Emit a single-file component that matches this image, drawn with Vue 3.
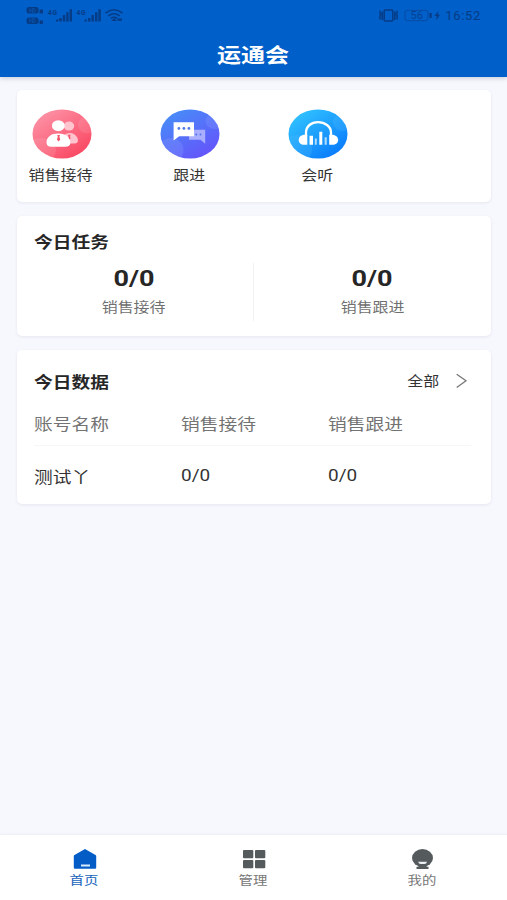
<script setup>
const tasks = [
  { value: '0/0', label: '销售接待' },
  { value: '0/0', label: '销售跟进' },
]
const columns = ['账号名称', '销售接待', '销售跟进']
const rows = [{ name: '测试丫', reception: '0/0', follow: '0/0' }]
</script>

<template>
  <div class="page">
    <header class="header">
      <div class="status">
        <svg class="status-left" width="98" height="20" viewBox="0 0 98 20">
          <g fill="#063b85">
            <rect x="0.5" y="1" width="12" height="6.5" rx="2.5" />
            <rect x="0.5" y="11.5" width="12" height="6.5" rx="2.5" />
            <rect x="13.5" y="3.5" width="3.5" height="4" rx="0.6" />
            <rect x="13.5" y="14.5" width="3.5" height="3.5" rx="0.6" />
            <path d="M30 13.5h2.4v2H30zM33.3 12h2.4v3.5h-2.4zM36.8 9h2.4v6.5h-2.4zM40.2 6.2h2.4v9.3h-2.4zM43.6 3.2h2.4v12.3h-2.4z" />
            <path d="M58.5 13.5h2.4v2h-2.4zM62 12h2.4v3.5H62zM65.5 9h2.4v6.5h-2.4zM69 6.2h2.4v9.3H69zM72.4 3.2h2.4v12.3h-2.4z" />
            <path d="M85.5 15l2.7-3 2.7 3zM91.5 12.5h4.5v2.2h-4.5z" />
          </g>
          <g class="micro" fill="#063b85">
            <text x="22" y="8.8" textLength="9">4G</text>
            <text x="50.5" y="8.8" textLength="9">4G</text>
          </g>
          <g class="micro" fill="#0650a8">
            <text x="3" y="6.5" textLength="7">HD</text>
            <text x="3" y="17" textLength="7">HD</text>
          </g>
          <g fill="none" stroke="#063b85" stroke-width="1.5">
            <path d="M79.5 7.2Q88 .5 96.5 7.2M82.2 10Q88 5.5 93.8 10M84.8 12.4Q88 10 91.2 12.4" />
          </g>
        </svg>
        <div class="status-right">
          <svg width="62" height="16" viewBox="0 0 62 16">
            <g fill="none" stroke="#063b85" stroke-width="1.5">
              <rect x="5.2" y="2" width="8.6" height="11" rx="1" />
              <path d="M3.2 3.4v8.5M.9 2.7v2.6l.8 1-.8 1.3v3.8M15.8 3.4v8.5M18.1 2.7v2.6l-.8 1 .8 1.3v3.8" />
            </g>
            <rect x="26" y="2.3" width="23" height="10.4" rx="2.4" fill="none" stroke="#064ba4" />
            <path d="M50.5 5h2.2v5h-2.2zM59.5 3l-4 5h2.4l-.8 4.2 4-5.4h-2.4z" fill="#063b85" />
            <text x="31.5" y="11.4" textLength="12.5" class="battery" fill="#064292">56</text>
          </svg>
          <span class="clock">16:52</span>
        </div>
      </div>
      <h1 class="wide">运通会</h1>
    </header>

    <main>
      <section class="card shortcuts">
        <div class="shortcut">
          <svg width="60" height="50" viewBox="0 0 60 50">
            <defs>
              <linearGradient id="pink" x1="0" y1="0" x2="0.8" y2="1">
                <stop offset="0" stop-color="#fd9bae" /><stop offset="1" stop-color="#fa4560" />
              </linearGradient>
              <clipPath id="oval"><ellipse cx="30" cy="25" rx="29.5" ry="24.5" /></clipPath>
            </defs>
            <ellipse cx="30" cy="25" rx="29.5" ry="24.5" fill="url(#pink)" />
            <g clip-path="url(#oval)" fill="#fff" fill-opacity=".1">
              <ellipse cx="55" cy="16" rx="9" ry="8.5" /><ellipse cx="9" cy="41" rx="15" ry="12" />
            </g>
            <g fill="#ffc4ce">
              <ellipse cx="37" cy="17" rx="5.2" ry="4.6" />
              <path d="M34 34.5h8.5c4 0 4.2-3.7 2.4-6.5-1.8-2.9-4.3-4-7-4-3 0-4.6 1-5.5 2z" />
            </g>
            <ellipse cx="26.3" cy="16.7" rx="6.4" ry="5.5" fill="#fff" />
            <path d="M14.5 33.5c0-5.6 4.6-9 11.9-9s12 4 12 9.3c0 2.5-2 3.9-5 3.9H19.3c-3 0-4.8-1.4-4.8-4.2z" fill="#fff" />
            <path d="M25.2 26h2.8l-.6 1.7.9 2.7-1.7 2-1.7-2 .9-2.7zM36 25.7h2.5l-.4 1.8.5 2-1.4 1z" fill="#f5566d" />
          </svg>
          <span class="wide">销售接待</span>
        </div>
        <div class="shortcut">
          <svg width="60" height="50" viewBox="0 0 60 50">
            <defs>
              <linearGradient id="violet" x1="0.1" y1="0" x2="0.8" y2="1">
                <stop offset="0" stop-color="#4590f8" /><stop offset="1" stop-color="#6652fb" />
              </linearGradient>
            </defs>
            <ellipse cx="30" cy="25" rx="29.5" ry="24.5" fill="url(#violet)" />
            <g clip-path="url(#oval)" fill="#8fa4ff" fill-opacity=".26">
              <ellipse cx="55" cy="12" rx="9.5" ry="8" /><ellipse cx="11" cy="41" rx="12.5" ry="12" />
            </g>
            <path d="M29 20.8h16.2v14l-4.7-4H29z" fill="#a9aeff" />
            <path d="M13.6 13.2H34v14H19.2l-5.6 4.3z" fill="#fff" />
            <g fill="#5177ed">
              <circle cx="18.9" cy="19.4" r="1.4" /><circle cx="23.9" cy="19.4" r="1.4" /><circle cx="28.9" cy="19.4" r="1.4" />
              <circle cx="36.3" cy="25.5" r="1" /><circle cx="40.5" cy="25.5" r="1" />
            </g>
          </svg>
          <span class="wide">跟进</span>
        </div>
        <div class="shortcut">
          <svg width="60" height="50" viewBox="0 0 60 50">
            <defs>
              <linearGradient id="sky" x1="0.05" y1="0.1" x2="0.8" y2="1">
                <stop offset="0" stop-color="#32c4ff" /><stop offset="1" stop-color="#0879fc" />
              </linearGradient>
            </defs>
            <ellipse cx="30" cy="25" rx="29.5" ry="24.5" fill="url(#sky)" />
            <g clip-path="url(#oval)" fill="#5ec8ff" fill-opacity=".2">
              <ellipse cx="54" cy="13" rx="9" ry="9" /><ellipse cx="9" cy="40" rx="15" ry="14" />
            </g>
            <path d="M18 27v-3.4c0-6.4 5.3-10.4 12-10.4s13 4 13 10.4V27" fill="none" stroke="#fff" stroke-width="2.3" />
            <path d="M19.3 25.7v10.1h-3c-3.4 0-5.6-2-5.6-4.8 0-3 2.5-5.3 5.8-5.3zM41.2 25.7v10.1h3.2c3.4 0 5.8-2 5.8-4.8 0-3-2.7-5.3-6-5.3z" fill="#fff" />
            <path d="M21.5 26.7H25v9.1h-3.5zM31.3 22.7h3v13.1h-3z" fill="#fff" />
            <path d="M26.8 29.5h2v6.3h-2zM36.6 28.3h2.2v7.5h-2.2z" fill="#a9daff" />
          </svg>
          <span class="wide">会听</span>
        </div>
      </section>

      <section class="card tasks">
        <h2 class="wide">今日任务</h2>
        <div class="task-list">
          <div v-for="task in tasks" :key="task.label" class="task">
            <strong class="wide">{{ task.value }}</strong>
            <span class="wide">{{ task.label }}</span>
          </div>
        </div>
      </section>

      <section class="card data">
        <div class="data-head">
          <h2 class="wide">今日数据</h2>
          <a class="all">
            <span class="wide">全部</span>
            <svg width="12" height="16" viewBox="0 0 12 16" fill="none" stroke="#777" stroke-width="1.3"><path d="M.7 1.2L10 7.8.7 14.5" /></svg>
          </a>
        </div>
        <div class="table-row labels">
          <span v-for="column in columns" :key="column"><span class="wide">{{ column }}</span></span>
        </div>
        <div v-for="row in rows" :key="row.name" class="table-row values">
          <span class="name"><span class="wide">{{ row.name }}</span></span>
          <span><span class="wide">{{ row.reception }}</span></span>
          <span><span class="wide">{{ row.follow }}</span></span>
        </div>
      </section>
    </main>

    <nav class="tabs">
      <a class="tab active">
        <svg width="24" height="22" viewBox="0 0 24 22">
          <path d="M12 1l10.5 6c.5.3.7.7.7 1.3v11c0 1-.5 1.5-1.5 1.5H2.3c-1 0-1.5-.5-1.5-1.5v-11c0-.6.2-1 .7-1.3z" fill="#045dc6" />
          <path d="M8 16.5h9v2H8z" fill="#d9ebff" />
        </svg>
        <span class="wide">首页</span>
      </a>
      <a class="tab">
        <svg width="24" height="22" viewBox="0 0 24 22" fill="#555b5d">
          <rect x="1" y="2" width="10.3" height="8.3" rx="1" /><rect x="13" y="2" width="10.3" height="8.3" rx="1" />
          <rect x="1" y="12" width="10.3" height="8.3" rx="1" /><rect x="13" y="12" width="10.3" height="8.3" rx="1" />
        </svg>
        <span class="wide">管理</span>
      </a>
      <a class="tab">
        <svg width="24" height="22" viewBox="0 0 24 22">
          <ellipse cx="11.5" cy="10" rx="10.5" ry="9" fill="#555b5d" />
          <path d="M7.5 17h8v1.7h2V21h-12v-2.3h2z" fill="#555b5d" />
          <path d="M7.2 13.7h8.8q-.5 2.2-2.5 2.2H9.7q-2 0-2.5-2.2z" fill="#eef1f1" />
        </svg>
        <span class="wide">我的</span>
      </a>
    </nav>
  </div>
</template>

<style>
body {
  margin: 0;
}
</style>

<style scoped>
.page {
  display: flex;
  flex-direction: column;
  height: 900px;
  overflow: hidden;
  background: #f7f8fd;
  color: #333;
  font-family: Roboto, "Noto Sans CJK SC", sans-serif;
}

/* Horizontally expanded lettering */
.wide {
  display: inline-block;
  white-space: nowrap;
  transform: scaleX(1.2);
}

.header {
  flex: none;
  display: flex;
  flex-direction: column;
  align-items: center;
  height: 77px;
  background: #005fc8;
  box-shadow: 0 1px 5px rgba(40, 60, 100, 0.25);
}

.status {
  display: flex;
  justify-content: space-between;
  align-self: stretch;
  height: 36px;
  padding: 6px 26px 0;
  box-sizing: border-box;
}

.status-right {
  display: flex;
  gap: 4px;
  height: 19px;
  align-items: center;
  color: #063b85;
}

.micro {
  font: bold 6.5px Roboto, sans-serif;
}

.battery {
  font: 11px Roboto, sans-serif;
}

.clock {
  font-size: 13px;
  line-height: 19px;
  letter-spacing: 0.7px;
}

h1 {
  margin: 0;
  padding-right: 1px;
  color: #fff;
  font-size: 20px;
  font-weight: 700;
  line-height: 40px;
}

main {
  flex: 1;
  display: flex;
  flex-direction: column;
  gap: 14px;
  padding: 13px 16px 0 17px;
}

.card {
  box-sizing: border-box;
  background: #fff;
  border-radius: 5px;
  box-shadow: 0 1px 3px rgba(50, 60, 110, 0.09);
}

.shortcuts {
  display: flex;
  height: 112px;
  padding-top: 19px;
}

.shortcut {
  display: flex;
  flex-direction: column;
  align-items: center;
  width: 128px;
  font-size: 13.3px;
  line-height: 20px;
  gap: 7px;
}

.shortcut .wide {
  padding-right: 1px;
}

.shortcut:first-child {
  width: 89px;
}

.shortcut:nth-child(2) {
  width: 167px;
}

.shortcut:last-child {
  width: 90px;
}

h2 {
  margin: 0;
  color: #262626;
  font-size: 15.6px;
  font-weight: 700;
  line-height: 24px;
  transform-origin: left;
}

.tasks {
  height: 120px;
  padding: 15px 0 0 16.5px;
}

.task-list {
  display: grid;
  grid-template-columns: 220px 1fr;
  height: 54px;
  margin-top: 8px;
}

.task {
  display: flex;
  flex-direction: column;
  align-items: center;
}

.task:first-child {
  padding-right: 18px;
  border-right: 1px solid #f1f1f3;
}

.task strong {
  color: #262626;
  font-size: 22.5px;
  line-height: 31px;
}

.task span {
  color: #707070;
  font-size: 13.3px;
  line-height: 27px;
}

.data {
  height: 154px;
  padding: 21px 20px 0 16.5px;
}

.data-head {
  display: flex;
  justify-content: space-between;
  align-items: center;
  height: 24px;
  padding-right: 3px;
}

.all {
  display: flex;
  align-items: center;
  gap: 19px;
  margin-top: -5px;
  font-size: 13.3px;
}

.table-row {
  display: grid;
  grid-template-columns: 147px 147px 1fr;
}

.table-row .wide {
  transform-origin: left;
}

.labels {
  height: 50px;
  border-bottom: 1px solid #f7f7f8;
  color: #737373;
  font-size: 15.6px;
  line-height: 60px;
}

.values {
  font-size: 15.8px;
  line-height: 59px;
}

.name {
  font-size: 15.6px;
  line-height: 65px;
}

.tabs {
  flex: none;
  display: grid;
  grid-template-columns: repeat(3, 1fr);
  height: 65px;
  box-sizing: border-box;
  padding-top: 13px;
  background: #fff;
  box-shadow: 0 -1px 2px rgba(50, 60, 90, 0.06);
}

.tab {
  display: flex;
  flex-direction: column;
  align-items: center;
  gap: 1px;
  color: #777;
  font-size: 12px;
  line-height: 20px;
}

.active {
  color: #1764bd;
}
</style>
